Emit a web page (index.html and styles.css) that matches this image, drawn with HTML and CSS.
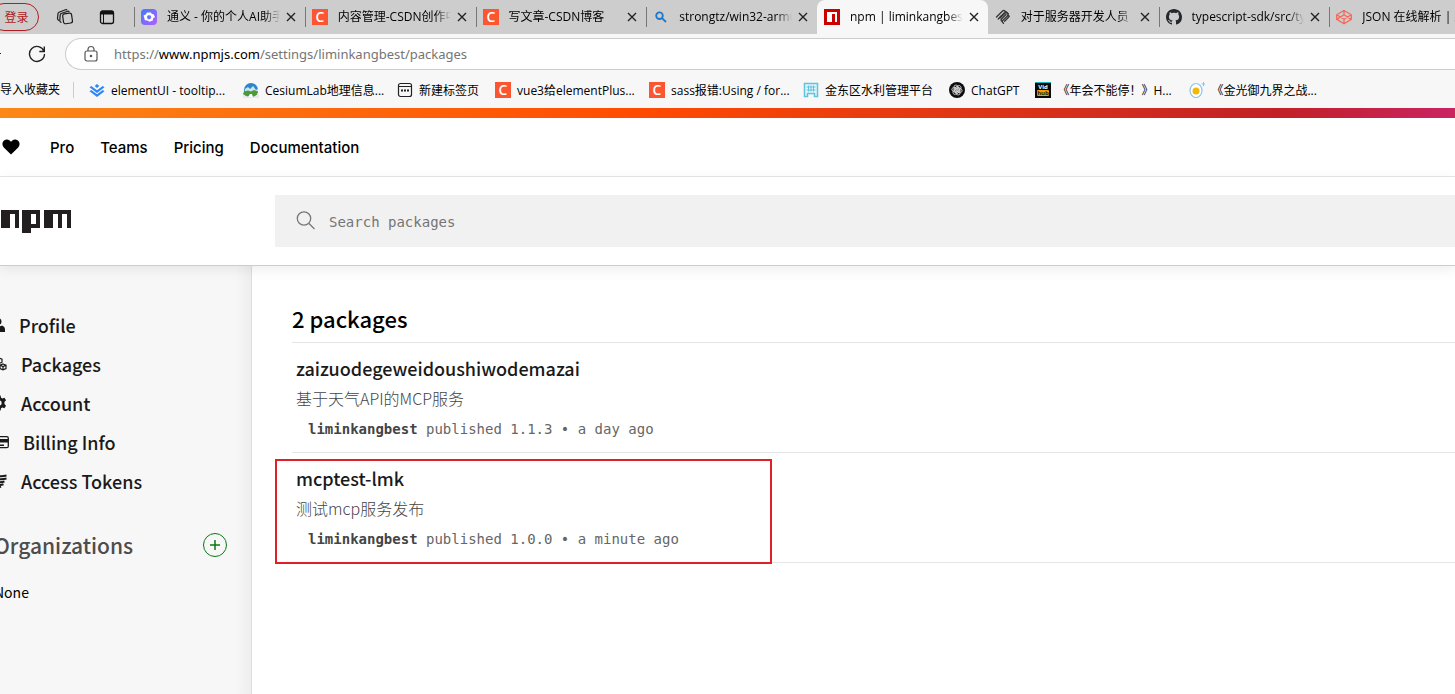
FILE: index.html
```html
<!DOCTYPE html>
<html lang="zh-CN">
	<head>
		<meta charset="utf-8">
		<title>npm | liminkangbest</title>
		<link rel="stylesheet" href="styles.css">
	</head>
	<body>
		<!-- 公用图标 -->
		<svg class="defs" width="0" height="0">
			<symbol id="csdn" viewBox="0 0 16 16">
				<rect width="16" height="16" fill="#fc5531"/>
				<text x="8" y="13" text-anchor="middle" font-family="Open Sans" font-size="14" font-weight="600" fill="#fff">C</text>
			</symbol>
			<symbol id="close" viewBox="0 0 10 10">
				<path d="M1 1l8 8M9 1l-8 8" stroke="#222" stroke-width="1.4" fill="none"/>
			</symbol>
		</svg>

		<div class="browser">
			<!-- 标签栏 -->
			<div class="tab-bar">
				<button class="login">登录</button>
				<button class="tool tool-space" aria-label="workspaces">
					<svg width="18" height="18" viewBox="0 0 18 18" fill="none" stroke="#1a1a1a" stroke-width="1.2">
						<rect x="7" y="5.500" width="9" height="10" rx="2" transform="rotate(-8 11 10)"/>
						<path d="M5.500 14.500l-1-.5q-.8-.5-.7-1.500l.4-5.500q.1-1 1-1.500l6.500-2.200q1-.3 1.600.5"/>
						<path d="M3 12.500l-1-.8q-.6-.6-.5-1.400l.5-4.600q.1-1 1-1.400l6.500-2.500q1-.3 1.600.4"/>
					</svg>
				</button>
				<button class="tool" aria-label="tab actions">
					<svg width="16" height="16" viewBox="0 0 16 16">
						<rect x="1.500" y="2" width="13" height="12.500" rx="2" fill="none" stroke="#111" stroke-width="1.300"/>
						<path d="M1.500 5.500V3.500q0-1.500 1.500-1.500h10q1.500 0 1.500 1.500v2z" fill="#111"/>
						<path d="M4.500 5v9.500" stroke="#111" stroke-width="1"/>
					</svg>
				</button>
				<div class="tabs">
					<div class="tab">
						<svg class="icon" viewBox="0 0 16 16">
							<defs><linearGradient id="ty" x1="0" y1="0" x2="1" y2="1"><stop offset="0" stop-color="#3f7bff"/><stop offset="1" stop-color="#b45cff"/></linearGradient></defs>
							<rect width="16" height="16" rx="4" fill="url(#ty)"/>
							<path d="M6 3.500h4l.8 1.500 1.700.2L14 8l-2 1.500-.2 2L8.500 12.800 6.500 11.500 3.800 11.200 3.200 8.500 2.500 6.500 4.800 5.500z" fill="#fff"/>
							<path d="M7 6.200h2.400l1 2-1.300 2H6.900L5.800 8z" fill="#6a72ff"/>
						</svg>
						<span class="title">通义 - 你的个人AI助手</span>
						<button class="close" aria-label="close"><svg><use href="#close"/></svg></button>
					</div>
					<div class="tab">
						<svg class="icon"><use href="#csdn"/></svg>
						<span class="title">内容管理-CSDN创作中心</span>
						<button class="close" aria-label="close"><svg><use href="#close"/></svg></button>
					</div>
					<div class="tab">
						<svg class="icon"><use href="#csdn"/></svg>
						<span class="title">写文章-CSDN博客</span>
						<button class="close" aria-label="close"><svg><use href="#close"/></svg></button>
					</div>
					<div class="tab">
						<svg class="icon" viewBox="0 0 16 16" fill="none" stroke="#1b78d0" stroke-width="1.800">
							<circle cx="6.500" cy="6.700" r="3.300"/><path d="M9 9.200l4 3.800"/>
						</svg>
						<span class="title">strongtz/win32-arm64</span>
						<button class="close" aria-label="close"><svg><use href="#close"/></svg></button>
					</div>
					<div class="tab current">
						<svg class="icon" viewBox="0 0 16 16">
							<rect width="16" height="16" fill="#cb0000"/>
							<rect x="3" y="3" width="10" height="10" fill="#fff"/>
							<rect x="8" y="5" width="3" height="8" fill="#cb0000"/>
						</svg>
						<span class="title">npm | liminkangbest</span>
						<button class="close" aria-label="close"><svg><use href="#close"/></svg></button>
					</div>
					<div class="tab">
						<svg class="icon" viewBox="0 0 16 16" fill="none" stroke="#333" stroke-width="1.300" stroke-linecap="round">
							<path d="M1.500 8l6-6q1.300-1 2.300 0t0 2.300L5 9M3.200 10l6-6M9.800 4.300q1.500-1.300 2.700 0t0 2.600L7.300 12q-.5.600.2 1.200l1 1M6.500 6.500L5 8M11 5.500L6.500 10q-1 1.300.3 2.300"/>
							<path d="M12.500 6.900q1.500-.8 1.700.6l-4.600 4.700M10.800 2.500l2.500 2.200"/>
						</svg>
						<span class="title">对于服务器开发人员</span>
						<button class="close" aria-label="close"><svg><use href="#close"/></svg></button>
					</div>
					<div class="tab">
						<svg class="icon" viewBox="0 0 16 16">
							<path fill="#24292f" d="M8 0C3.580 0 0 3.580 0 8c0 3.540 2.290 6.530 5.470 7.590.4.070.55-.17.55-.38 0-.19-.01-.82-.01-1.490-2.010.37-2.530-.49-2.690-.94-.09-.23-.48-.94-.82-1.130-.28-.15-.68-.52-.01-.53.63-.01 1.080.58 1.230.82.72 1.210 1.870.87 2.330.66.070-.52.28-.87.51-1.070-1.780-.2-3.640-.89-3.640-3.950 0-.87.31-1.590.82-2.150-.08-.2-.36-1.020.08-2.120 0 0 .67-.21 2.200.82.640-.18 1.320-.27 2-.27s1.360.09 2 .27c1.530-1.040 2.200-.82 2.200-.82.44 1.100.16 1.920.08 2.120.51.560.82 1.270.82 2.150 0 3.070-1.870 3.750-3.650 3.950.29.250.54.730.54 1.480 0 1.070-.01 1.930-.01 2.200 0 .21.15.46.55.38A8.010 8.010 0 0 0 16 8c0-4.420-3.580-8-8-8z"/>
						</svg>
						<span class="title">typescript-sdk/src/ty</span>
						<button class="close" aria-label="close"><svg><use href="#close"/></svg></button>
					</div>
					<div class="tab">
						<svg class="icon" viewBox="0 0 16 16" fill="none" stroke="#f4695c" stroke-width="1.300">
							<path d="M8 1.500l7.300 4.300v4.600L8 14.700.7 10.400V5.800zM8 1.500v4.200M8 10.300v4.400M.7 5.800L8 10.300l7.300-4.500M.7 10.400L8 5.700l7.300 4.700"/>
						</svg>
						<span class="title">JSON 在线解析 | 菜鸟</span>
						<button class="close" aria-label="close"><svg><use href="#close"/></svg></button>
					</div>
				</div>
			</div>

			<!-- 地址栏 -->
			<div class="address-bar">
				<svg class="arrow" width="6" height="16" viewBox="0 0 6 16"><path d="M0 7.500h1" stroke="#222"/></svg>
				<button class="tool reload" aria-label="reload">
					<svg width="18" height="18" viewBox="0 0 18 18" fill="none" stroke="#222" stroke-width="1.400">
						<path d="M16 6.200A7.500 7.500 0 1 0 16.500 9M16.300 1.500v5h-5"/>
					</svg>
				</button>
				<div class="url">
					<svg width="16" height="18" viewBox="0 0 16 18" fill="none" stroke="#555" stroke-width="1.200">
						<rect x="2" y="6" width="12" height="10" rx="2"/><path d="M5 6V4q.4-2.500 3-2.500T11 4v2"/><circle cx="8" cy="11" r=".7" fill="#555"/>
					</svg>
					<span class="address">https://<b>www.npmjs.com</b>/settings/liminkangbest/packages</span>
				</div>
			</div>

			<!-- 收藏夹 -->
			<div class="bookmarks">
				<button class="import">导入收藏夹</button>
				<a class="bookmark long" href="#">
					<svg class="icon" viewBox="0 0 16 16" fill="#2f86f6">
						<path d="M8 2l2.300 2L8 6 5.700 4z"/>
						<path d="M.5 5.300L2.300 4 8 8.300 13.700 4l1.800 1.300L8 11zM.5 9.300L2.300 8 8 12.300 13.700 8l1.800 1.300L8 15z"/>
					</svg>elementUI - tooltip...
				</a>
				<a class="bookmark long" href="#">
					<svg class="icon" viewBox="0 0 16 16">
						<rect y="12" width="16" height="4" fill="#e8e8e8"/>
						<circle cx="8" cy="8" r="7" fill="#2d86c8"/>
						<path d="M2 7l3-2 2 2 3-3 3 4 2-1v3l-13 .5z" fill="#c9e6f5"/>
						<path d="M1 9.500l4-1 3 1 3-1.500 4 1.500-1 3-3 2-2-1.500-3 1.500-3-.5-3-2z" fill="#4c9a33"/>
						<path d="M5 15l2-3 2 0 1 3z" fill="#fff"/>
					</svg>CesiumLab地理信息...
				</a>
				<a class="bookmark" href="#">
					<svg class="icon" viewBox="0 0 16 16">
						<rect x="1.500" y="1.500" width="13" height="13" rx="2" fill="none" stroke="#222" stroke-width="1.200"/>
						<path d="M1.500 4.500h13" stroke="#222"/><path d="M4 8.500h2M7 8.500h2M10 8.500h2" stroke="#222" stroke-width="1.800"/>
					</svg>新建标签页
				</a>
				<a class="bookmark long" href="#"><svg class="icon"><use href="#csdn"/></svg>vue3给elementPlus...</a>
				<a class="bookmark long" href="#"><svg class="icon"><use href="#csdn"/></svg>sass报错:Using / for...</a>
				<a class="bookmark" href="#">
					<svg class="icon" viewBox="0 0 16 16" fill="none" stroke="#62c3dc" stroke-width="1.500">
						<path d="M1.500 14.500v-13h13v13h-3v-3h-7v3z" fill="#e2f6fb"/><path d="M3.500 5h9M3.500 8h9M5.500 3.500v6M8 3.500v6M10.500 3.500v6" stroke-width="1"/>
					</svg>金东区水利管理平台
				</a>
				<a class="bookmark" href="#">
					<svg class="icon" viewBox="0 0 16 16">
						<circle cx="8" cy="8" r="8" fill="#0d0d0d"/>
						<g fill="none" stroke="#ddd" stroke-width=".8">
							<rect x="5" y="3" width="4" height="7.500" rx="2"/>
							<rect x="5" y="3" width="4" height="7.500" rx="2" transform="rotate(60 8 8)"/>
							<rect x="5" y="3" width="4" height="7.500" rx="2" transform="rotate(120 8 8)"/>
							<rect x="5" y="3" width="4" height="7.500" rx="2" transform="rotate(180 8 8)"/>
							<rect x="5" y="3" width="4" height="7.500" rx="2" transform="rotate(240 8 8)"/>
							<rect x="5" y="3" width="4" height="7.500" rx="2" transform="rotate(300 8 8)"/>
						</g>
					</svg>ChatGPT
				</a>
				<a class="bookmark long" href="#">
					<svg class="icon" viewBox="0 0 16 16" font-family="Open Sans" font-weight="700" font-size="6" text-anchor="middle">
						<rect width="16" height="16" fill="#0a0a0a"/><rect width="16" height="1" fill="#1bb"/><rect x="2" y="8" width="12" height="6" rx="1" fill="#f90"/>
						<text x="8" y="6.500" fill="#fff">Vid</text><text x="8" y="13" fill="#222">hub</text>
					</svg>《年会不能停！》H...
				</a>
				<a class="bookmark" href="#">
					<svg class="icon" viewBox="0 0 16 16">
						<ellipse cx="7" cy="8.500" rx="6" ry="7" fill="#fff" stroke="#8cc4ee" stroke-width="1.200"/>
						<circle cx="7" cy="9" r="3.500" fill="#f5b800"/><path d="M14.500 0v4M12.500 2h4" stroke="#8cc4ee"/>
					</svg>《金光御九界之战...
				</a>
			</div>
		</div>

		<div class="stripe"></div>
		<nav class="top-nav">
			<svg width="18" height="16" viewBox="0 0 18 16"><path d="M9 15.500L1.800 8.500C-1 5 .8 1 4.500.5 6.500.3 8 1.300 9 2.800 10 1.300 11.500.3 13.500.5 17.200 1 19 5 16.200 8.500z"/></svg>
			<a href="#">Pro</a>
			<a href="#">Teams</a>
			<a href="#">Pricing</a>
			<a href="#">Documentation</a>
		</nav>
		<header class="header">
			<a class="logo" href="#" aria-label="npm">
				<svg width="70" height="23" viewBox="0 0 70 23" fill="#231f20">
					<rect width="9" height="18"/><rect x="9" width="9" height="4"/><rect x="14" y="4" width="4" height="14"/>
					<rect x="21" width="9" height="23"/><rect x="30" width="9" height="4"/><rect x="35" y="4" width="4" height="14"/><rect x="30" y="14" width="5" height="4"/>
					<rect x="43" width="9" height="18"/><rect x="52" width="18" height="4"/><rect x="57" y="4" width="4" height="14"/><rect x="66" y="4" width="4" height="14"/>
				</svg>
			</a>
			<form class="search">
				<svg width="20" height="20" viewBox="0 0 20 20" fill="none" stroke="#777" stroke-width="1.300"><circle cx="8" cy="7.500" r="6.700"/><path d="M13 12.500l5.500 5.500"/></svg>
				<input type="text" placeholder="Search packages" aria-label="Search packages">
			</form>
		</header>

		<div class="content">
			<aside class="sidebar">
				<ul>
					<li><a href="#">
						<svg width="14" height="14" viewBox="0 0 14 14"><circle cx="7" cy="3.500" r="3.500"/><path d="M0 14v-2.500Q0 8.500 3 7.500q4 2 8 0 3 1 3 4V14z"/></svg>Profile</a></li>
					<li><a href="#">
						<svg width="16" height="14" viewBox="0 0 16 14" fill="none" stroke="#1a1a1a" stroke-width="1.200"><path d="M8 1l3 1.200v3L8 6.500 5 5.200v-3zM4.500 7l3 1.200v3.300l-3 1.300-3-1.300V8.200zM12 7l3 1.200v3.300l-3 1.300-3-1.300V8.200zM9 8.200l3 1.400 3-1.400M12 9.600v3"/></svg>Packages</a></li>
					<li><a href="#">
						<svg width="16" height="16" viewBox="0 0 15 14"><path fill-rule="evenodd" d="M6 0h3l.4 2 1.300.7 1.900-.7 1.500 2.500-1.500 1.500v2l1.500 1.500-1.500 2.500-1.900-.7-1.300.7L9 14H6l-.4-2-1.300-.7-1.900.7L.9 9.500 2.400 8V6L.9 4.500 2.400 2l1.900.7L5.600 2zM7.500 4.500a2.500 2.500 0 1 0 0 5 2.500 2.500 0 0 0 0-5z"/></svg>Account</a></li>
					<li><a href="#">
						<svg width="18" height="14" viewBox="0 0 18 14"><rect x=".7" y="1.700" width="16.600" height="11" rx="1.500" fill="none" stroke="#1a1a1a" stroke-width="1.300"/><path d="M1 4h16v3.500H1zM9 9.500h4V11H9z"/></svg>Billing Info</a></li>
					<li><a href="#">
						<svg width="16" height="14" viewBox="0 0 16 14" fill="none" stroke="#1a1a1a" stroke-width="2"><path d="M5 1.500q5 1.500 10.500 0M5 4.500q5 1.500 10.500 0M3 7.500q5 1.500 10.500 0M3 10.300q5 1.500 9.500 0M3 13q4 1 7-.5"/></svg>Access Tokens</a></li>
				</ul>
				<div class="orgs">
					<h2>Organizations</h2>
					<button class="add" aria-label="add organization"><svg width="10" height="10"><path d="M5 0v10M0 5h10" stroke="#0a7a12" stroke-width="1.500"/></svg></button>
				</div>
				<p class="none">None</p>
			</aside>

			<main class="main">
				<h2>2 packages</h2>
				<ul class="packages">
					<li>
						<h3><a href="#">zaizuodegeweidoushiwodemazai</a></h3>
						<p class="desc">基于天气API的MCP服务</p>
						<p class="meta"><a href="#">liminkangbest</a> published 1.1.3 • a day ago</p>
					</li>
					<li class="marked">
						<h3><a href="#">mcptest-lmk</a></h3>
						<p class="desc">测试mcp服务发布</p>
						<p class="meta"><a href="#">liminkangbest</a> published 1.0.0 • a minute ago</p>
					</li>
				</ul>
			</main>
		</div>
	</body>
</html>
```
FILE: styles.css
```css
*,*::after{
	box-sizing: border-box;
}
body{
	margin: 0;
	min-height: 100vh;
	display: flex;
	flex-direction: column;
	overflow: hidden;
	background-color: #fff;
	font-family: "Noto Sans CJK SC", sans-serif;
	color: #000;
}
ul,h2,h3,p{
	margin: 0;
	padding: 0;
	list-style: none;
}
a{
	color: inherit;
	text-decoration: none;
}
button{
	border: 0;
	padding: 0;
	background: none;
	font: inherit;
	color: inherit;
	cursor: pointer;
}
svg{
	display: block;
	flex: none;
}
.defs{
	display: none;
}
.icon{
	width: 16px;
	height: 16px;
}

/* 浏览器外框 */
.browser{
	background-color: #f7f7f7;
	font-family: "Open Sans", "Noto Sans CJK SC", sans-serif;
	font-size: 12px;
}
.tab-bar{
	display: flex;
	align-items: center;
	height: 34px;
	background-color: #cdcdcd;
}
.login{
	flex: none;
	width: 49px;
	height: 28px;
	margin-left: -10px;
	padding-left: 4px;
	border: 1px solid #b01c22;
	border-radius: 14px;
	color: #b01c22;
}
.tool{
	flex: none;
	margin-left: 25px;
}
.tool-space{
	margin-left: 17px;
}
.tabs{
	display: flex;
	flex: 1;
	min-width: 0;
	margin: 0 -45px 0 19px;
	height: 34px;
}
.tab{
	display: flex;
	flex: 1;
	min-width: 0;
	align-items: center;
	padding: 0 9px 0 7px;
	background: linear-gradient(#777, #777) left center / 1px 20px no-repeat;
}
.current{
	background: #f7f7f7;
	border-radius: 8px 8px 0 0;
}
.current + .tab{
	background: none;
}
.title{
	flex: 1;
	margin: 0 6px 0 10px;
	overflow: hidden;
	white-space: nowrap;
	line-height: 20px;
	-webkit-mask-image: linear-gradient(90deg, #000 86%, transparent);
	mask-image: linear-gradient(90deg, #000 86%, transparent);
}
.close svg{
	width: 10px;
	height: 10px;
}
.address-bar{
	display: flex;
	align-items: center;
	height: 40px;
}
.reload{
	margin: 0 19px 0 22px;
}
.url{
	display: flex;
	flex: 1;
	align-items: center;
	height: 32px;
	padding-left: 17px;
	border: 1px solid #ccc;
	border-right: 0;
	border-radius: 16px 0 0 16px;
	background-color: #fff;
}
.address{
	margin-left: 15px;
	font-family: "Noto Sans", sans-serif;
	font-size: 13px;
	color: #757575;
}
.address b{
	font-weight: 400;
	color: #000;
}
.bookmarks{
	display: flex;
	align-items: center;
	height: 34px;
	padding-bottom: 2px;
	white-space: nowrap;
}
.import{
	padding-right: 13px;
	border-right: 1px solid #ccc;
	margin-right: 15px;
	line-height: 16px;
}
.bookmark{
	display: flex;
	flex: none;
	align-items: center;
	gap: 6px;
	padding-right: 16px;
}
.long{
	width: 154px;
}

/* npm 顶部 */
.stripe{
	height: 10px;
	background: linear-gradient(90deg, #fb8817, #ff4b01 44%, #c12127 88%, #e02aff 132%);
}
.top-nav{
	display: flex;
	align-items: center;
	gap: 26px;
	height: 59px;
	padding-left: 2px;
	border-bottom: 1px solid #e5e5e5;
	font-family: Inter, sans-serif;
	font-size: 15px;
	font-weight: 500;
}
.top-nav svg{
	margin-right: 4px;
}
.header{
	position: relative;
	display: flex;
	height: 89px;
	padding: 18px 0;
	border-bottom: 1px solid #ccc;
	background-color: #fff;
	box-shadow: 0 4px 12px rgba(0,0,0,.07);
}
.logo{
	flex: none;
	width: 274px;
	margin-left: 1px;
	padding-top: 15px;
}
.search{
	display: flex;
	flex: 1;
	align-items: center;
	gap: 13px;
	padding-left: 21px;
	background-color: #f1f1f1;
}
.search input{
	flex: 1;
	border: 0;
	outline: 0;
	padding: 2px 0 0;
	background: none;
	font: 14px "DejaVu Sans Mono", monospace;
}
.search input::placeholder{
	color: #757575;
}

/* 左侧菜单 */
.content{
	display: flex;
	flex: 1;
}
.sidebar{
	flex: none;
	width: 261px;
	margin-left: -9px;
	padding: 39px 24px 0 0;
	border-right: 1px solid #ddd;
	background: linear-gradient(90deg, #f7f7f7 94%, #eee);
}
.sidebar li a{
	display: flex;
	align-items: center;
	gap: 14px;
	height: 39px;
	font-size: 18px;
	font-weight: 500;
	color: #1a1a1a;
}
.sidebar li svg{
	fill: currentColor;
}
.sidebar li svg[fill="none"]{
	fill: none;
}
.orgs{
	display: flex;
	align-items: center;
	justify-content: space-between;
	margin-top: 33px;
	padding-left: 3px;
	height: 24px;
}
.orgs h2{
	font-size: 21px;
	font-weight: 500;
	color: #4d4d4d;
}
.add{
	display: flex;
	align-items: center;
	justify-content: center;
	width: 24px;
	height: 24px;
	border: 1px solid #0a7a12;
	border-radius: 50%;
}
.none{
	margin-top: 25px;
	padding-left: 3px;
	font-size: 14px;
}

/* 包列表 */
.main{
	flex: 1;
	padding: 36px 0 0 40px;
}
.main h2{
	height: 41px;
	border-bottom: 1px solid #e5e5e5;
	line-height: 32px;
	font-size: 22px;
	font-weight: 500;
}
.packages li{
	position: relative;
	height: 110px;
	padding: 10px 4px 8px;
	border-bottom: 1px solid #e5e5e5;
	line-height: 30px;
}
.packages h3{
	font-size: 18px;
	font-weight: 500;
	line-height: 30px;
	color: #1a1a1a;
}
.desc{
	font-size: 16px;
	font-weight: 300;
	color: #444;
}
.meta{
	padding: 1px 0 0 12px;
	font-family: "DejaVu Sans Mono", monospace;
	font-size: 14px;
	color: #666;
}
.meta a{
	font-weight: 700;
	color: #444;
}
/* 红框标记 */
.marked::after{
	content: "";
	position: absolute;
	top: 6px;
	left: -17px;
	width: 497px;
	height: 105px;
	border: 2px solid #e02028;
}
```
